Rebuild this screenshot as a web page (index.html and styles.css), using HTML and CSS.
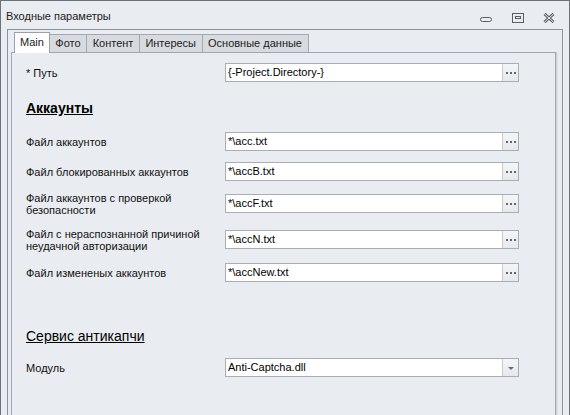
FILE: index.html
```html
<!DOCTYPE html>
<html>
<head>
<meta charset="utf-8">
<link rel="stylesheet" href="styles.css">
</head>
<body>
<div class="window">
  <div class="titlebar">
    <span class="title">Входные параметры</span>
    <div class="controls">
      <svg class="ctl-min" width="13" height="10" viewBox="0 0 13 10"><rect x="0.5" y="4.5" width="11" height="4" rx="2" fill="none" stroke="#5b5f64"/></svg>
      <svg width="12" height="10" viewBox="0 0 12 10"><rect x="0.5" y="0.5" width="11" height="9" fill="none" stroke="#5b5f64"/><rect x="3.5" y="3.5" width="5" height="2" fill="none" stroke="#5b5f64"/></svg>
      <svg width="12" height="10" viewBox="0 0 12 10"><path d="M1.5 1 L10.5 9 M10.5 1 L1.5 9" stroke="#5b5f64" stroke-width="3" fill="none"/><path d="M1.5 1 L10.5 9 M10.5 1 L1.5 9" stroke="#e9ecf0" stroke-width="1" fill="none"/></svg>
    </div>
  </div>
  <div class="panel">
    <div class="tabs">
      <div class="tab active">Main</div>
      <div class="tab">Фото</div>
      <div class="tab">Контент</div>
      <div class="tab">Интересы</div>
      <div class="tab">Основные данные</div>
    </div>
    <div class="page">
      <div class="row first">
        <div class="label">* Путь</div>
        <div class="field"><span class="val">{-Project.Directory-}</span><span class="btn"><i></i><i></i><i></i></span></div>
      </div>

      <div class="heading h1">Аккаунты</div>

      <div class="group">
        <div class="row">
          <div class="label">Файл аккаунтов</div>
          <div class="field"><span class="val">*\acc.txt</span><span class="btn"><i></i><i></i><i></i></span></div>
        </div>
        <div class="row">
          <div class="label">Файл блокированных аккаунтов</div>
          <div class="field"><span class="val">*\accB.txt</span><span class="btn"><i></i><i></i><i></i></span></div>
        </div>
        <div class="row tall t3">
          <div class="label">Файл аккаунтов с проверкой<br>безопасности</div>
          <div class="field"><span class="val">*\accF.txt</span><span class="btn"><i></i><i></i><i></i></span></div>
        </div>
        <div class="row tall">
          <div class="label">Файл с нераспознанной причиной<br>неудачной авторизации</div>
          <div class="field"><span class="val">*\accN.txt</span><span class="btn"><i></i><i></i><i></i></span></div>
        </div>
        <div class="row t5">
          <div class="label">Файл измененых аккаунтов</div>
          <div class="field"><span class="val">*\accNew.txt</span><span class="btn"><i></i><i></i><i></i></span></div>
        </div>
      </div>

      <div class="heading h2">Сервис антикапчи</div>

      <div class="row module">
        <div class="label">Модуль</div>
        <div class="field"><span class="val">Anti-Captcha.dll</span><span class="btn combo"><b></b></span></div>
      </div>
    </div>
  </div>
</div>
</body>
</html>
```

FILE: styles.css
```css
html, body {
  margin: 0;
  padding: 0;
  background: #e9ecf0;
}
body {
  font-family: "Liberation Sans", Arial, sans-serif;
  font-size: 11px;
  color: #111;
}
.window {
  width: 570px;
  height: 415px;
  box-sizing: border-box;
  border: 1px solid #6c7279;
  border-bottom: none;
  background: #e9ecf0;
  overflow: hidden;
}
.titlebar {
  height: 28px;
  display: flex;
  align-items: flex-start;
  justify-content: space-between;
}
.title {
  margin: 9px 0 0 5px;
  line-height: 13px;
  color: #222;
}
.controls {
  display: flex;
  gap: 19px;
  margin: 12px 14px 0 0;
}
.panel {
  margin: 0 6px;
  border: 1px solid #8d939b;
  border-bottom: none;
  height: 400px;
  padding: 0 6px 0 3px;
}
.tabs {
  height: 22px;
  display: flex;
  align-items: flex-end;
  padding-left: 3px;
  position: relative;
  z-index: 1;
}
.tab {
  height: 17px;
  line-height: 17px;
  padding: 0 5.5px;
  background: #d7dbe0;
  border: 1px solid #a3a9b1;
  border-bottom: none;
  margin-left: -1px;
  color: #222;
}
.tab.active {
  margin-left: 0;
  height: 20px;
  line-height: 19px;
  padding: 0 5px;
  background: #fff;
  border-color: #9aa0a8;
  margin-bottom: -1px;
  position: relative;
  z-index: 2;
}
.page {
  border: 1px solid #a0a6ae;
  border-bottom: none;
  height: 380px;
  padding: 10px 0 0 14px;
  display: flex;
  flex-direction: column;
  box-shadow: 1px 0 0 #cfd3d8, 2px 0 0 #dde0e4;
}
.row {
  display: grid;
  grid-template-columns: 199px 294px;
  align-items: center;
  min-height: 19px;
}
.row.tall {
  min-height: 25px;
}
.label {
  line-height: 12px;
  color: #111;
}
.field {
  display: flex;
  height: 19px;
  box-sizing: border-box;
  border: 1px solid #a8aeb5;
  background: #fff;
}
.val {
  flex: 1;
  padding-left: 2px;
  line-height: 17px;
  color: #000;
}
.btn {
  width: 15px;
  border-left: 1px solid #c7cbd0;
  background: linear-gradient(#f4f5f7, #e6e9ec);
  display: flex;
  align-items: center;
  justify-content: center;
  gap: 2px;
}
.btn i {
  width: 2px;
  height: 2px;
  background: #62666c;
}
.btn.combo b {
  width: 0;
  height: 0;
  border-left: 3px solid transparent;
  border-right: 3px solid transparent;
  border-top: 3px solid #6a6e74;
  margin-top: 1px;
}
.heading {
  font-size: 14px;
  line-height: 16px;
  text-decoration: underline;
  color: #000;
}
.h1 {
  font-weight: bold;
  margin-top: 18px;
}
.h2 {
  margin-top: 46px;
}
.group {
  display: flex;
  flex-direction: column;
  gap: 11px;
  margin-top: 16px;
}
.t3 {
  margin-top: -1px;
}
.module {
  margin-top: 14px;
}
```
